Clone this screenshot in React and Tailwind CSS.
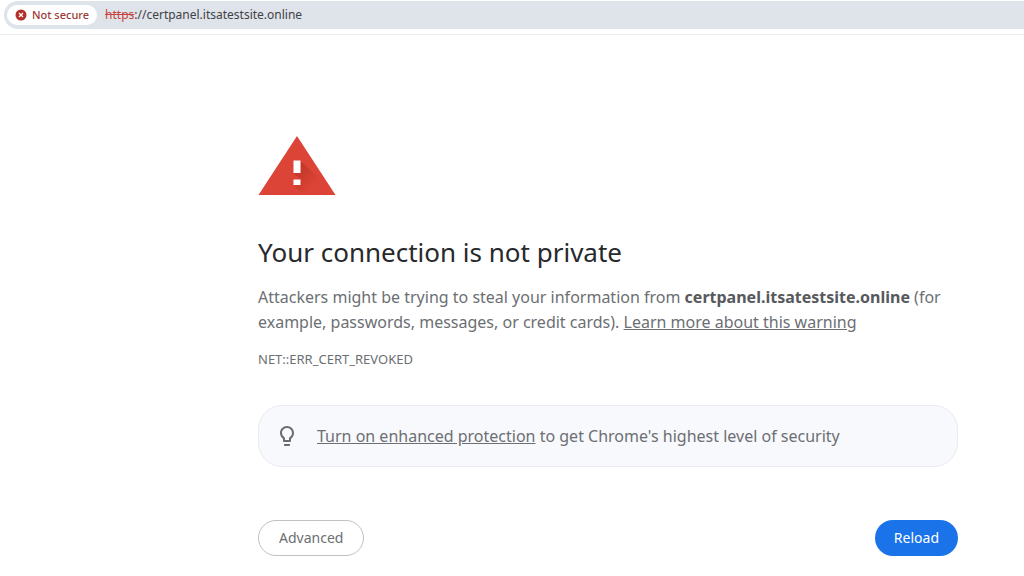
import React from 'react';

const CloseBadge = () => (
  <svg className="h-3 w-3 shrink-0" viewBox="0 0 12 12" aria-hidden="true">
    <circle cx="6" cy="6" r="5.5" fill="#b3302a" />
    <path d="M4 4l4 4M8 4l-4 4" stroke="#fff" strokeWidth="1.2" />
  </svg>
);

const WarningTriangle = () => (
  <svg className="h-[60px] w-[78px]" viewBox="0 0 78 60" role="img" aria-label="Warning">
    <defs>
      <linearGradient id="shade" x1="0" y1="0" x2="1" y2="1">
        <stop offset="0" stopColor="#a52714" stopOpacity=".6" />
        <stop offset=".7" stopColor="#a52714" stopOpacity="0" />
      </linearGradient>
    </defs>
    <path d="M39 1L77.500 60H.5z" fill="#db4437" />
    <path d="M42.500 26l15 14L66 60H46l-10-9.500 6.500-.5V44l-7-6h7z" fill="url(#shade)" />
    <path d="M35.500 25.500h7V38h-7zM35.500 44.500h7V50h-7z" fill="#fff" />
  </svg>
);

const Bulb = () => (
  <svg className="h-6 w-6 shrink-0" viewBox="0 0 24 24" fill="#696c70" aria-hidden="true">
    <path d="M9 21c0 .55.45 1 1 1h4c.55 0 1-.45 1-1v-1H9v1zm3-19C8.140 2 5 5.140 5 9c0 2.380 1.190 4.470 3 5.740V17c0 .55.45 1 1 1h6c.55 0 1-.45 1-1v-2.260c1.810-1.270 3-3.360 3-5.740 0-3.860-3.140-7-7-7zm2.850 11.100l-.85.6V16h-4v-2.300l-.85-.6A4.997 4.997 0 0 1 7 9c0-2.760 2.240-5 5-5s5 2.240 5 5c0 1.630-.8 3.160-2.150 4.100z" />
  </svg>
);

const AddressBar = () => (
  <header className="border-b border-[#ececee] pt-px pb-[5px]">
    <div className="ml-1 flex h-7 items-center rounded-l-full bg-[#dfe3ea] pl-[3px]">
      <button type="button" className="flex h-5 items-center gap-[5px] rounded-full bg-white px-2 text-[11px] font-medium text-[#9c3a35]">
        <CloseBadge />
        Not secure
      </button>
      <p className="ml-2 text-xs leading-5 text-[#3f4246]">
        <span className="text-[#c5463f] line-through">https</span>://certpanel.itsatestsite.online
      </p>
    </div>
  </header>
);

const App = () => {
  return (
    <div className="min-h-screen bg-white font-['Noto_Sans','Open_Sans',sans-serif]">
      <AddressBar />
      <main className="pt-[100px] pr-[66px] pl-[258px] text-[#6c6f73]">
        <WarningTriangle />
        <h1 className="mt-[39px] text-[26px] leading-9 text-[#27292c]">Your connection is not private</h1>
        <p className="mt-[15px] text-base leading-[25px]">
          Attackers might be trying to steal your information from{' '}
          <strong className="font-bold text-[#56595d]">certpanel.itsatestsite.online</strong> (for example, passwords, messages, or credit cards).{' '}
          <a href="#learn" className="underline">Learn more about this warning</a>
        </p>
        <p className="mt-[14px] text-[13px] leading-5">NET::ERR_CERT_REVOKED</p>
        <div className="mt-9 flex h-[62px] items-center gap-[18px] rounded-[24px] border border-[#e8eaed] bg-[#f8f9fc] px-4">
          <Bulb />
          <p className="text-base leading-[25px]">
            <a href="#protection" className="underline">Turn on enhanced protection</a> to get Chrome's highest level of security
          </p>
        </div>
        <div className="mt-[53px] flex items-center justify-between">
          <button type="button" className="h-9 rounded-full border border-[#bfc1c4] px-5 text-sm">Advanced</button>
          <button type="button" className="h-9 rounded-full bg-[#1a73e8] px-[19px] text-sm text-white">Reload</button>
        </div>
      </main>
    </div>
  );
};

export default App;
